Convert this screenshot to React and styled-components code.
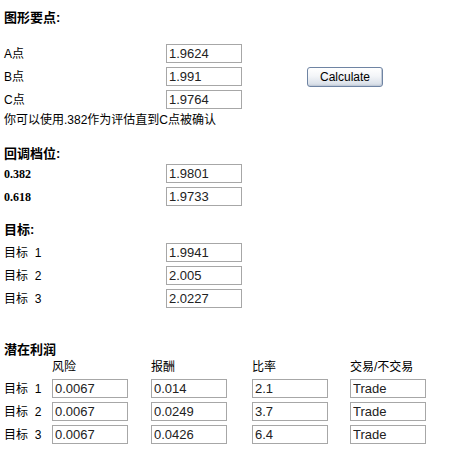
import React from "react";
import styled, { createGlobalStyle } from "styled-components";

const GlobalStyle = createGlobalStyle`
  html, body {
    margin: 0;
    padding: 0;
    background: #fff;
  }
  body {
    font-family: "Liberation Sans", "Noto Sans CJK SC", sans-serif;
    font-size: 12px;
    color: #000;
  }
`;

const Page = styled.div`
  width: 471px;
  height: 450px;
  padding: 0 0 0 4px;
  box-sizing: border-box;
  overflow: hidden;
`;

const Heading = styled.div`
  font-family: "Liberation Sans", "Noto Sans CJK SC", sans-serif;
  font-size: 13px;
  font-weight: 700;
  line-height: 16px;
  height: 16px;
  margin-top: ${({ $mt }) => $mt}px;
`;

const Label = styled.div`
  font-family: ${({ $serif }) =>
    $serif
      ? `"Liberation Serif", "Noto Sans CJK SC", serif`
      : `"Liberation Sans", "Noto Sans CJK SC", sans-serif`};
  font-size: 12px;
  font-weight: ${({ $serif }) => ($serif ? 700 : 400)};
  line-height: 16px;
  white-space: pre;
`;

const Field = styled.input`
  box-sizing: border-box;
  width: 76px;
  height: 19px;
  margin: 0;
  padding: 0 2px;
  border: 1px solid #a7a7a7;
  background: #fff;
  font-family: "Liberation Sans", sans-serif;
  font-size: 13px;
  color: #222;
  outline: none;
`;

const FieldGrid = styled.div`
  display: grid;
  grid-template-columns: 162px 76px 1fr;
  grid-auto-rows: 19px;
  row-gap: 4px;
  align-items: center;
  margin-top: ${({ $mt }) => $mt}px;

  & > ${Label} {
    grid-column: 1;
  }
  & > ${Field} {
    grid-column: 2;
  }
`;

const CalcButton = styled.button`
  grid-column: 3;
  grid-row: 2;
  justify-self: start;
  margin-left: 65px;
  width: 76px;
  height: 20px;
  box-sizing: border-box;
  padding: 0;
  border: 1px solid #6f84a3;
  border-radius: 3px;
  background: linear-gradient(#ffffff 0%, #f3f5f8 45%, #dde3eb 85%, #c9d1dc 100%);
  font-family: "Liberation Sans", sans-serif;
  font-size: 12px;
  color: #000;
  box-shadow: inset -1px -1px 0 #c2cbd8;
`;

const Note = styled.div`
  line-height: 16px;
  margin-top: 3px;
  white-space: nowrap;
`;

const ProfitGrid = styled.div`
  display: grid;
  grid-template-columns: 48px 99px 101px 98px 80px;
  grid-template-rows: 16px;
  grid-auto-rows: 19px;
  row-gap: 4px;
  align-items: center;
  margin-top: 1px;
`;

const ColHead = styled.div`
  line-height: 16px;
  white-space: nowrap;
`;

const points = [
  ["A点", "1.9624"],
  ["B点", "1.991"],
  ["C点", "1.9764"],
];

const retrace = [
  ["0.382", "1.9801"],
  ["0.618", "1.9733"],
];

const targets = [
  ["目标  1", "1.9941"],
  ["目标  2", "2.005"],
  ["目标  3", "2.0227"],
];

const profits = [
  ["目标  1", "0.0067", "0.014", "2.1", "Trade"],
  ["目标  2", "0.0067", "0.0249", "3.7", "Trade"],
  ["目标  3", "0.0067", "0.0426", "6.4", "Trade"],
];

export default function App() {
  return (
    <Page>
      <GlobalStyle />
      <Heading $mt={10}>图形要点:</Heading>
      <FieldGrid $mt={18}>
        {points.map(([label, value]) => (
          <React.Fragment key={label}>
            <Label>{label}</Label>
            <Field defaultValue={value} />
          </React.Fragment>
        ))}
        <CalcButton type="button">Calculate</CalcButton>
      </FieldGrid>
      <Note>你可以使用.382作为评估直到C点被确认</Note>

      <Heading $mt={18}>回调档位:</Heading>
      <FieldGrid $mt={2}>
        {retrace.map(([label, value]) => (
          <React.Fragment key={label}>
            <Label $serif>{label}</Label>
            <Field defaultValue={value} />
          </React.Fragment>
        ))}
      </FieldGrid>

      <Heading $mt={16}>目标:</Heading>
      <FieldGrid $mt={5}>
        {targets.map(([label, value]) => (
          <React.Fragment key={label}>
            <Label>{label}</Label>
            <Field defaultValue={value} />
          </React.Fragment>
        ))}
      </FieldGrid>

      <Heading $mt={34}>潜在利润</Heading>
      <ProfitGrid>
        <span />
        <ColHead>风险</ColHead>
        <ColHead>报酬</ColHead>
        <ColHead>比率</ColHead>
        <ColHead>交易/不交易</ColHead>
        {profits.map(([label, ...values]) => (
          <React.Fragment key={label}>
            <Label>{label}</Label>
            {values.map((v, i) => (
              <Field key={i} defaultValue={v} />
            ))}
          </React.Fragment>
        ))}
      </ProfitGrid>
    </Page>
  );
}
